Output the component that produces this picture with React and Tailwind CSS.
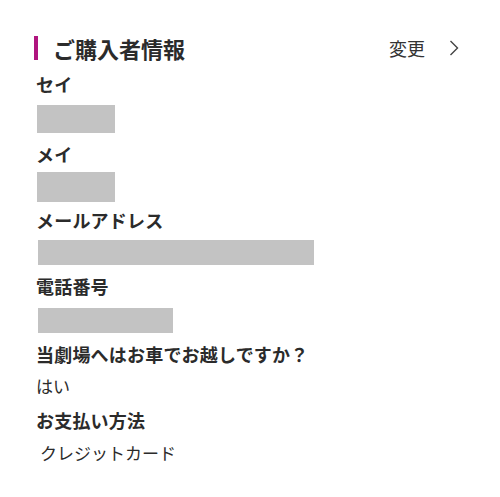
export default function App() {
  const font = { fontFamily: '"Noto Sans CJK JP", "Noto Sans", sans-serif' };
  const Label = ({ children, className = "" }) => (
    <div className={"h-8 flex items-center text-[18px] font-semibold text-[#2b2b2b] tracking-[0.2px] " + className}>{children}</div>
  );
  const Value = ({ children, className = "" }) => (
    <div className={"h-8 flex items-center text-[17px] text-[#2b2b2b] " + className}>{children}</div>
  );
  return (
    <div className="w-[500px] h-[497px] bg-white pl-[36px] pr-[41px] pt-[30px]" style={font}>
      <div className="h-9 flex items-center justify-between">
        <div className="flex items-center">
          <div className="w-1 h-6 bg-[#b0157f] -ml-[2px]" />
          <div className="ml-[15px] text-[22px] font-semibold text-[#2b2b2b] leading-none">ご購入者情報</div>
        </div>
        <div className="flex items-center">
          <span className="text-[18px] text-[#333] leading-none">変更</span>
          <svg className="ml-[24px]" width="10" height="18" viewBox="0 0 10 18" fill="none">
            <path d="M1.5 2 L8.5 9 L1.5 16" stroke="#444" strokeWidth="1.4" />
          </svg>
        </div>
      </div>
      <Label className="mt-[2px]">セイ</Label>
      <div className="mt-[5px] ml-[1px] w-[78px] h-[28px] bg-[#c3c3c3]" />
      <Label className="mt-[5px]">メイ</Label>
      <div className="mt-[2px] ml-[1px] w-[78px] h-[30px] bg-[#c3c3c3]" />
      <Label className="mt-[2px]">メールアドレス</Label>
      <div className="mt-[4px] ml-[2px] w-[276px] h-[25px] bg-[#c3c3c3]" />
      <Label className="mt-[5px]">電話番号</Label>
      <div className="mt-[6px] ml-[2px] w-[135px] h-[25px] bg-[#c3c3c3]" />
      <Label className="mt-[5px]">当劇場へはお車でお越しですか？</Label>
      <Value>はい</Value>
      <Label className="mt-[2px]">お支払い方法</Label>
      <Value className="mt-[1px] pl-[4px]">クレジットカード</Value>
    </div>
  );
}
